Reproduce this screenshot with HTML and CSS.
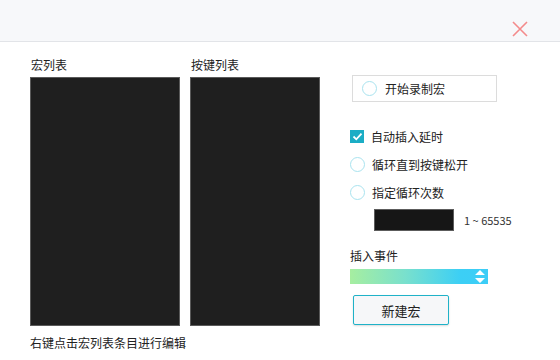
FILE: index.html
```html
<!DOCTYPE html>
<html lang="zh-CN">
<head>
<meta charset="utf-8">
<title>宏</title>
<link rel="stylesheet" href="styles.css">
</head>
<body>
<div class="win">
  <div class="header">
    <svg class="close" width="16" height="16" viewBox="0 0 16 16">
      <path d="M1 1 L15 15 M15 1 L1 15" stroke="#f48b8b" stroke-width="1.6" fill="none"/>
    </svg>
  </div>
  <div class="main">
    <div class="left">
      <div class="lists">
        <div class="col">
          <div class="label">宏列表</div>
          <div class="box box-macro"></div>
        </div>
        <div class="col">
          <div class="label">按键列表</div>
          <div class="box box-keys"></div>
        </div>
      </div>
      <div class="note">右键点击宏列表条目进行编辑</div>
    </div>
    <div class="right">
      <div class="record"><span class="radio"></span><span>开始录制宏</span></div>
      <div class="opt"><span class="check"><svg width="13" height="13" viewBox="0 0 13 13"><path d="M2.5 6.5 L5.3 9.3 L10.5 3.6" stroke="#fff" stroke-width="1.8" fill="none"/></svg></span><span>自动插入延时</span></div>
      <div class="opt"><span class="radio"></span><span>循环直到按键松开</span></div>
      <div class="opt"><span class="radio"></span><span>指定循环次数</span></div>
      <div class="countrow"><div class="count"></div><span class="range">1 ~ 65535</span></div>
      <div class="label evlabel">插入事件</div>
      <div class="select">
        <svg class="arrows" width="10" height="13" viewBox="0 0 10 13"><path d="M5 0 L10 5 L0 5 Z M0 8 L10 8 L5 13 Z" fill="#fff"/></svg>
      </div>
      <div class="btn">新建宏</div>
    </div>
  </div>
</div>
</body>
</html>
```
FILE: styles.css
```css
html, body {
  margin: 0;
  padding: 0;
  background: #fff;
}
body {
  font-family: "Noto Sans CJK SC", "Liberation Sans", sans-serif;
  font-size: 12px;
  color: #222;
}
.win {
  width: 560px;
  height: 360px;
  overflow: hidden;
}
.header {
  height: 41px;
  background: #f7f8fa;
  border-bottom: 1px solid #e2e4e8;
  display: flex;
  justify-content: flex-end;
  align-items: flex-start;
}
.close {
  margin-top: 21px;
  margin-right: 32px;
}
.main {
  display: flex;
  padding-left: 30px;
}
.left {
  width: 320px;
  padding-top: 15px;
}
.lists {
  display: flex;
  gap: 10px;
}
.label {
  height: 16px;
  line-height: 16px;
  padding-left: 1px;
}
.box {
  margin-top: 4px;
  height: 249px;
  background: #1f1f1f;
  border: 1px solid #5a5a5a;
  box-sizing: border-box;
}
.box-macro { width: 150px; }
.box-keys { width: 130px; }
.note {
  margin-top: 9px;
  height: 16px;
  line-height: 16px;
}
.right {
  width: 200px;
  padding-top: 33px;
  white-space: nowrap;
}
.record {
  margin-left: 2px;
  width: 145px;
  height: 27px;
  box-sizing: border-box;
  border: 1px solid #dcdcdc;
  display: flex;
  align-items: center;
  padding-left: 9px;
  gap: 8px;
}
.radio {
  width: 15px;
  height: 15px;
  box-sizing: border-box;
  border: 1.5px solid #a9e3ef;
  border-radius: 50%;
  flex: none;
}
.opt {
  height: 28px;
  display: flex;
  align-items: center;
  gap: 7px;
}
.record + .opt { margin-top: 20px; }
.check {
  width: 14px;
  height: 13px;
  background: #1badc5;
  display: flex;
  align-items: center;
  justify-content: center;
  flex: none;
}
.countrow {
  margin-top: 3px;
  margin-left: 24px;
  display: flex;
  align-items: center;
  gap: 10px;
}
.count {
  width: 80px;
  height: 22px;
  box-sizing: border-box;
  background: #161616;
  border: 1px solid #5c5c5c;
  flex: none;
}
.range {
  font-size: 11px;
  color: #333;
}
.evlabel {
  margin-top: 17px;
  padding-left: 0;
}
.select {
  margin-top: 5px;
  width: 138px;
  height: 15px;
  background: linear-gradient(to right, #a6eea0 0%, #79e0cd 40%, #3ccff5 80%, #3ccdf7 100%);
  display: flex;
  align-items: center;
  justify-content: flex-end;
}
.arrows {
  margin-right: 3px;
}
.btn {
  margin-top: 11px;
  margin-left: 3px;
  width: 96px;
  height: 30px;
  box-sizing: border-box;
  border: 1px solid #1fb2c8;
  border-radius: 2px;
  background: #f6f7f9;
  box-shadow: 0 1px 2px rgba(0,0,0,0.15);
  display: flex;
  align-items: center;
  justify-content: center;
  font-size: 13px;
}
```
